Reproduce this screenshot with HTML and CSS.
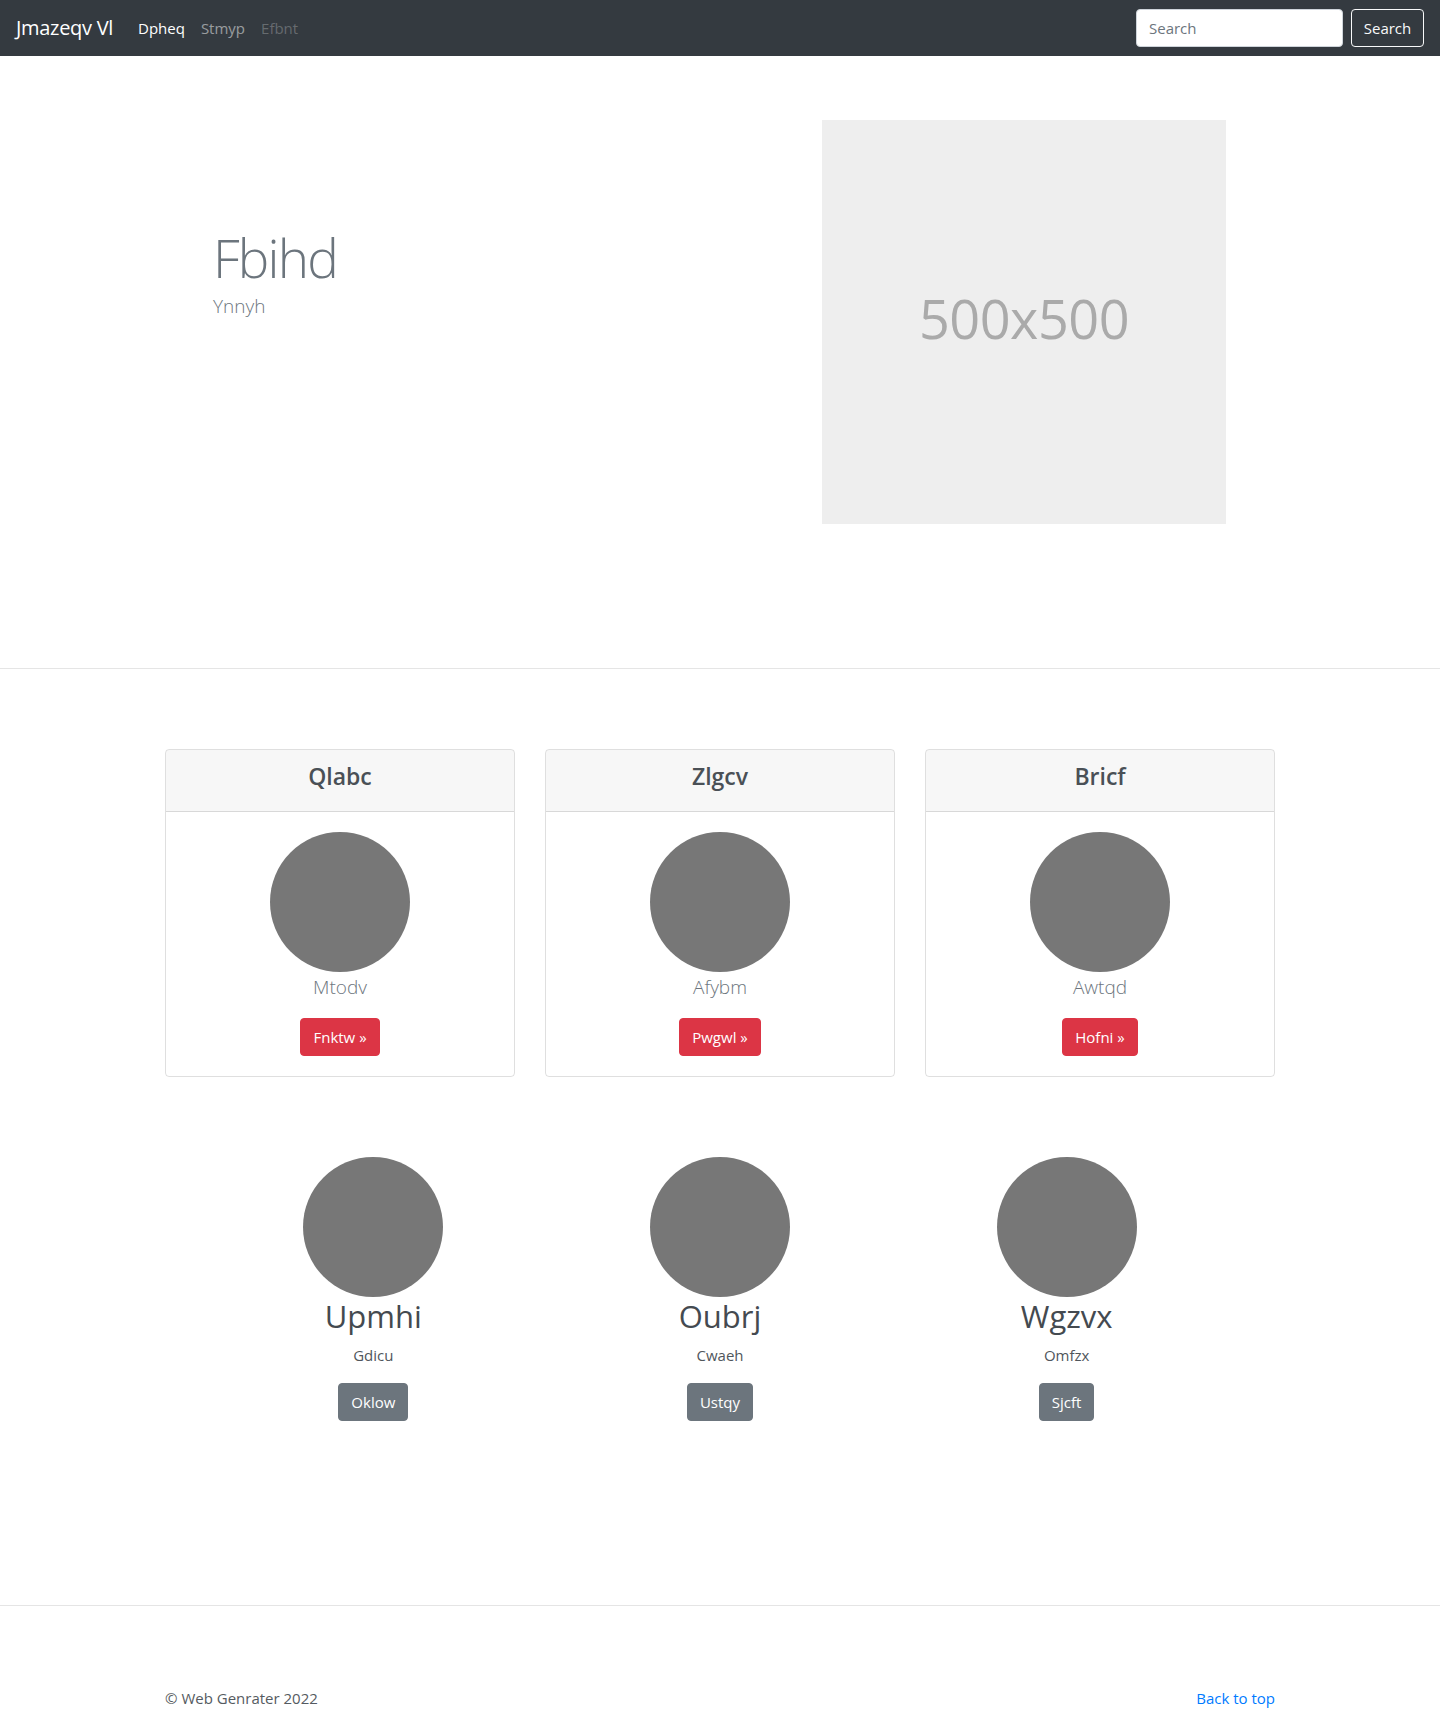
FILE: index.html
```html
<!DOCTYPE html>
<html lang="en">
<head>
<meta charset="utf-8">
<title>Jmazeqv Vl</title>
<link rel="stylesheet" href="styles.css">
</head>
<body>
<nav class="navbar">
  <a class="brand" href="#">Jmazeqv Vl</a>
  <ul class="nav">
    <li><a class="nav-link active" href="#">Dpheq</a></li>
    <li><a class="nav-link" href="#">Stmyp</a></li>
    <li><a class="nav-link disabled" href="#">Efbnt</a></li>
  </ul>
  <form class="search">
    <input class="search-input" type="text" placeholder="Search">
    <button class="btn btn-outline-light" type="button">Search</button>
  </form>
</nav>

<main>
  <section class="hero">
    <div class="hero-text">
      <h1 class="display">Fbihd</h1>
      <p class="hero-lead">Ynnyh</p>
    </div>
    <div class="placeholder-img"><span>500x500</span></div>
  </section>

  <hr class="divider">

  <section class="cards">
    <div class="card">
      <div class="card-header"><h4 class="card-title">Qlabc</h4></div>
      <div class="card-body">
        <div class="circle"></div>
        <p class="card-lead">Mtodv</p>
        <a class="btn btn-danger" href="#">Fnktw &raquo;</a>
      </div>
    </div>
    <div class="card">
      <div class="card-header"><h4 class="card-title">Zlgcv</h4></div>
      <div class="card-body">
        <div class="circle"></div>
        <p class="card-lead">Afybm</p>
        <a class="btn btn-danger" href="#">Pwgwl &raquo;</a>
      </div>
    </div>
    <div class="card">
      <div class="card-header"><h4 class="card-title">Bricf</h4></div>
      <div class="card-body">
        <div class="circle"></div>
        <p class="card-lead">Awtqd</p>
        <a class="btn btn-danger" href="#">Hofni &raquo;</a>
      </div>
    </div>
  </section>

  <section class="people">
    <div class="person">
      <div class="circle"></div>
      <h2 class="person-name">Upmhi</h2>
      <p class="person-text">Gdicu</p>
      <a class="btn btn-secondary" href="#">Oklow</a>
    </div>
    <div class="person">
      <div class="circle"></div>
      <h2 class="person-name">Oubrj</h2>
      <p class="person-text">Cwaeh</p>
      <a class="btn btn-secondary" href="#">Ustqy</a>
    </div>
    <div class="person">
      <div class="circle"></div>
      <h2 class="person-name">Wgzvx</h2>
      <p class="person-text">Omfzx</p>
      <a class="btn btn-secondary" href="#">Sjcft</a>
    </div>
  </section>

  <hr class="divider">

  <footer class="footer">
    <p class="copy">&copy; Web Genrater 2022</p>
    <a class="back-top" href="#">Back to top</a>
  </footer>
</main>
</body>
</html>
```

FILE: styles.css
```css
* { box-sizing: border-box; }

html, body {
  margin: 0;
  padding: 0;
}

body {
  font-family: "Open Sans", "Noto Sans", "Liberation Sans", sans-serif;
  font-size: 16px;
  line-height: 1.5;
  color: #444a50;
  background: #fff;
}

a { text-decoration: none; }

/* Navbar */
.navbar {
  display: flex;
  align-items: center;
  height: 56px;
  padding: 8px 16px;
  background: #343a40;
}

.brand {
  font-size: 20px;
  line-height: 30px;
  color: #fff;
  margin-right: 16px;
  letter-spacing: -0.3px;
}

.nav {
  display: flex;
  list-style: none;
  margin: 0;
  padding: 0 0 0 1px;
  flex: 1;
}

.nav-link {
  display: block;
  padding: 8px 8px;
  font-size: 15px;
  color: rgba(255, 255, 255, 0.5);
}

.nav-link.active { color: #fff; }
.nav-link.disabled { color: rgba(255, 255, 255, 0.25); }

.search {
  display: flex;
  align-items: center;
}

.search-input {
  width: 207px;
  height: 38px;
  padding: 6px 12px;
  font-family: inherit;
  font-size: 15px;
  color: #495057;
  background: #fff;
  border: 1px solid #ced4da;
  border-radius: 4px;
  margin-right: 8px;
}

.search-input::placeholder { color: #6c757d; }

.btn {
  display: inline-block;
  padding: 6px 12px;
  font-family: inherit;
  font-size: 15px;
  line-height: 24px;
  border: 1px solid transparent;
  border-radius: 4px;
  cursor: pointer;
  text-align: center;
}

.btn-outline-light {
  background: transparent;
  color: #f8f9fa;
  border-color: #f8f9fa;
  height: 38px;
  width: 73px;
  padding: 6px 0;
}

.btn-danger {
  background: #dc3545;
  border-color: #dc3545;
  color: #fff;
}

.btn-secondary {
  background: #6c757d;
  border-color: #6c757d;
  color: #fff;
}

/* Hero */
.hero {
  display: grid;
  grid-template-columns: 1fr 404px;
  width: 1140px;
  margin: 0 auto;
  padding: 64px 64px 0 63px;
  height: 612px;
}

.hero-text {
  padding-top: 106px;
}

.display {
  margin: 0;
  font-size: 53px;
  font-weight: 300;
  line-height: 64px;
  color: #6c757d;
  letter-spacing: -1.8px;
}

.hero-lead {
  margin: 1px 0 0;
  font-size: 19px;
  font-weight: 300;
  line-height: 30px;
  color: #6c757d;
}

.placeholder-img {
  width: 404px;
  height: 404px;
  background: #eeeeee;
  display: flex;
  align-items: center;
  justify-content: center;
}

.placeholder-img span {
  font-size: 54px;
  color: #aaaaaa;
  letter-spacing: -0.5px;
  padding-bottom: 8px;
}

.divider {
  margin: 0;
  border: 0;
  border-top: 1px solid rgba(0, 0, 0, 0.1);
}

/* Cards */
.cards {
  display: grid;
  grid-template-columns: repeat(3, 350px);
  column-gap: 30px;
  width: 1110px;
  margin: 80px auto 0;
}

.card {
  border: 1px solid rgba(0, 0, 0, 0.125);
  border-radius: 4px;
  overflow: hidden;
  text-align: center;
}

.card-header {
  padding: 12px 20px;
  background: rgba(0, 0, 0, 0.03);
  border-bottom: 1px solid rgba(0, 0, 0, 0.125);
}

.card-title {
  margin: 0 0 8px;
  font-size: 23px;
  font-weight: 600;
  line-height: 28.8px;
  color: #4a5056;
}

.card-body {
  padding: 20px;
  display: flex;
  flex-direction: column;
  align-items: center;
}

.circle {
  width: 140px;
  height: 140px;
  border-radius: 50%;
  background: #777777;
  flex: none;
}

.card-lead {
  margin: 0 0 16px;
  font-size: 19px;
  font-weight: 300;
  line-height: 30px;
  color: #6c757d;
}

/* People */
.people {
  display: grid;
  grid-template-columns: repeat(3, 1fr);
  width: 1040px;
  margin: 80px auto 0;
  padding-bottom: 184px;
}

.person {
  display: flex;
  flex-direction: column;
  align-items: center;
  text-align: center;
}

.person-name {
  margin: 0 0 8px;
  font-size: 31px;
  font-weight: 400;
  line-height: 38.4px;
  color: #444a50;
}

.person-text {
  margin: 0 0 16px;
  font-size: 15px;
  line-height: 24px;
  color: #50565c;
}

/* Footer */
.footer {
  display: flex;
  justify-content: space-between;
  width: 1110px;
  margin: 0 auto;
  padding: 81px 0 48px;
}

.copy {
  margin: 0;
  font-size: 15px;
  color: #555b61;
}

.back-top {
  font-size: 15px;
  color: #007bff;
}
```
